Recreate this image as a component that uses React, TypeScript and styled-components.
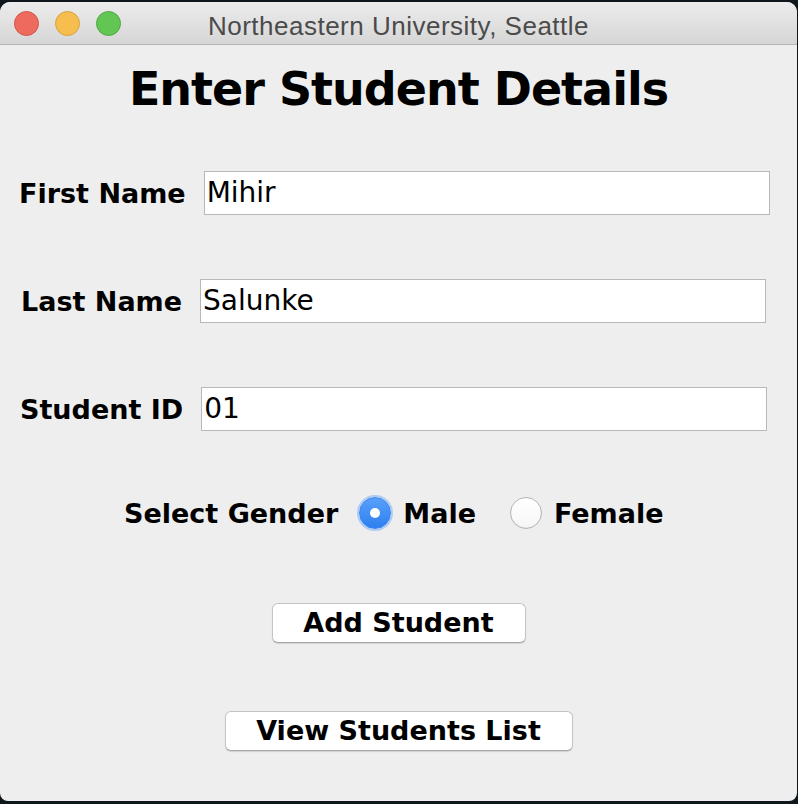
import styled, { createGlobalStyle } from "styled-components";

const GlobalStyle = createGlobalStyle`
    html, body {
        margin: 0;
        padding: 0;
        background: #0d171c;
    }
    body {
        width: 798px;
        height: 804px;
        overflow: hidden;
    }
`

const Desktop = styled.div`
    padding-top: 2px;
    height: 804px;
    box-sizing: border-box;
`

const Window = styled.div`
    width: 797px;
    height: 799px;
    background: #eeeeee;
    border-radius: 10px 10px 8px 8px;
    overflow: hidden;
    display: flex;
    flex-direction: column;
`

const TitleBar = styled.div`
    height: 42px;
    flex: 0 0 auto;
    background: linear-gradient(#ececec, #d6d6d6);
    border-bottom: 1px solid #b4b4b4;
    display: flex;
    align-items: center;
    position: relative;
    padding-left: 14px;
    gap: 16px;
`

const Light = styled.span<{ $fill: string; $edge: string }>`
    width: 23px;
    height: 23px;
    border-radius: 50%;
    background: ${p => p.$fill};
    border: 1px solid ${p => p.$edge};
`

const Title = styled.div`
    position: absolute;
    left: 0;
    right: 0;
    top: 9px;
    text-align: center;
    font-family: "Liberation Sans", Arial, sans-serif;
    font-size: 26px;
    letter-spacing: 0.5px;
    color: #4b4b4b;
    pointer-events: none;
`

const Content = styled.div`
    flex: 1;
    display: flex;
    flex-direction: column;
    font-family: "DejaVu Sans", sans-serif;
    color: #000;
`

const Heading = styled.h1`
    margin: 17px 0 0 0;
    height: 54px;
    line-height: 54px;
    text-align: center;
    font-size: 46px;
    letter-spacing: -1px;
    font-weight: bold;
`

const Row = styled.div<{ $indent: number; $top: number }>`
    display: flex;
    align-items: center;
    height: 44px;
    padding-left: ${p => p.$indent}px;
    margin-top: ${p => p.$top}px;
    gap: 18px;
`

const Label = styled.label`
    font-size: 27px;
    font-weight: bold;
    white-space: nowrap;
`

const Field = styled.div`
    width: 566px;
    height: 44px;
    box-sizing: border-box;
    background: #fff;
    border: 1px solid #b8b8b8;
    font-size: 28px;
    line-height: 42px;
    padding-left: 2px;
`

const GenderRow = styled.div`
    display: flex;
    align-items: center;
    height: 40px;
    margin-top: 62px;
    padding-left: 124px;
`

const Choice = styled.div<{ $gap: number }>`
    display: flex;
    align-items: center;
    margin-left: ${p => p.$gap}px;
    gap: 12px;
`

const Radio = styled.span<{ $on?: boolean }>`
    width: 32px;
    height: 32px;
    box-sizing: border-box;
    border-radius: 50%;
    display: flex;
    align-items: center;
    justify-content: center;
    background: ${p => (p.$on ? "linear-gradient(#58a0fa, #2e7ff0)" : "linear-gradient(#ffffff, #f6f6f6)")};
    border: 1px solid ${p => (p.$on ? "#3a86f0" : "#b5b5b5")};
    box-shadow: ${p => (p.$on ? "0 0 0 2px rgba(110, 170, 250, 0.5)" : "inset 0 -1px 1px rgba(0,0,0,0.05)")};

    &::after {
        content: "";
        display: ${p => (p.$on ? "block" : "none")};
        width: 10px;
        height: 10px;
        border-radius: 50%;
        background: #fff;
    }
`

const ButtonRow = styled.div<{ $top: number }>`
    display: flex;
    justify-content: center;
    margin-top: ${p => p.$top}px;
`

const Button = styled.button<{ $width: number }>`
    width: ${p => p.$width}px;
    height: 40px;
    background: #fff;
    border: 1px solid #c4c4c4;
    border-bottom-color: #a8a8a8;
    border-radius: 6px;
    box-shadow: 0 1px 1px rgba(0, 0, 0, 0.12);
    font-family: "DejaVu Sans", sans-serif;
    font-size: 27px;
    font-weight: bold;
    color: #000;
    padding: 0;
    line-height: 38px;
`

function App() {
    return (
        <Desktop>
            <GlobalStyle />
            <Window>
                <TitleBar>
                    <Light $fill="#ee6a5f" $edge="#d25447" />
                    <Light $fill="#f6be4f" $edge="#d9a13c" />
                    <Light $fill="#62c655" $edge="#4fa740" />
                    <Title>Northeastern University, Seattle</Title>
                </TitleBar>

                <Content>
                    <Heading>Enter Student Details</Heading>

                    <Row $indent={19} $top={55}>
                        <Label>First Name</Label>
                        <Field>Mihir</Field>
                    </Row>
                    <Row $indent={21} $top={64}>
                        <Label>Last Name</Label>
                        <Field>Salunke</Field>
                    </Row>
                    <Row $indent={20} $top={64}>
                        <Label>Student ID</Label>
                        <Field>01</Field>
                    </Row>

                    <GenderRow>
                        <Label>Select Gender</Label>
                        <Choice $gap={21}>
                            <Radio $on />
                            <Label>Male</Label>
                        </Choice>
                        <Choice $gap={34}>
                            <Radio />
                            <Label>Female</Label>
                        </Choice>
                    </GenderRow>

                    <ButtonRow $top={70}>
                        <Button $width={254}>Add Student</Button>
                    </ButtonRow>
                    <ButtonRow $top={68}>
                        <Button $width={348}>View Students List</Button>
                    </ButtonRow>
                </Content>
            </Window>
        </Desktop>
    )
}

export default App
